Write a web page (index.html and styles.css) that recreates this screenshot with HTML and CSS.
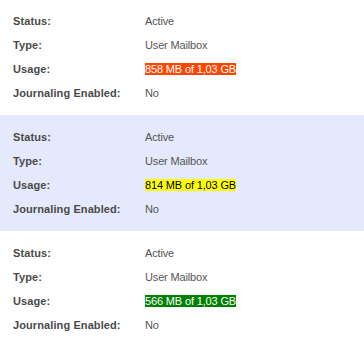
FILE: index.html
```html
<!DOCTYPE html>
<html lang="en">
<head>
    <meta charset="UTF-8">
    <meta name="viewport" content="width=device-width, initial-scale=1.0">
    <title>Mailboxes</title>
    <link rel="stylesheet" href="styles.css">
</head>
<body>

<div class="list">
    <div class="mailbox">
        <div class="row"><span class="label">Status:</span><span class="value">Active</span></div>
        <div class="row"><span class="label">Type:</span><span class="value">User Mailbox</span></div>
        <div class="row"><span class="label">Usage:</span><span class="value"><span class="usage high">858 MB of 1,03 GB</span></span></div>
        <div class="row"><span class="label">Journaling Enabled:</span><span class="value">No</span></div>
    </div>

    <div class="mailbox alt">
        <div class="row"><span class="label">Status:</span><span class="value">Active</span></div>
        <div class="row"><span class="label">Type:</span><span class="value">User Mailbox</span></div>
        <div class="row"><span class="label">Usage:</span><span class="value"><span class="usage medium">814 MB of 1,03 GB</span></span></div>
        <div class="row"><span class="label">Journaling Enabled:</span><span class="value">No</span></div>
    </div>

    <div class="mailbox">
        <div class="row"><span class="label">Status:</span><span class="value">Active</span></div>
        <div class="row"><span class="label">Type:</span><span class="value">User Mailbox</span></div>
        <div class="row"><span class="label">Usage:</span><span class="value"><span class="usage low">566 MB of 1,03 GB</span></span></div>
        <div class="row"><span class="label">Journaling Enabled:</span><span class="value">No</span></div>
    </div>
</div>

</body>
</html>
```
FILE: styles.css
```css
body {
    font-family: "Liberation Sans", Arial, sans-serif;
    font-size: 11px;
    margin: 0;
    padding: 0;
    background-color: #fff;
}
.list {
    margin-top: -1px;
}
.mailbox {
    padding: 10px 13px;
}
.mailbox.alt {
    background-color: #e4e9fb;
}
.row {
    display: flex;
    height: 24px;
    align-items: center;
}
.label {
    width: 132px;
    font-weight: bold;
    color: #4a4a4a;
    letter-spacing: 0.1px;
}
.value {
    color: #555;
    letter-spacing: -0.15px;
}
.usage {
    line-height: 13px;
}
.high {
    background-color: #ff4500;
    color: #fff;
}
.medium {
    background-color: #ffff00;
    color: #000;
}
.low {
    background-color: #008000;
    color: #fff;
}
```
